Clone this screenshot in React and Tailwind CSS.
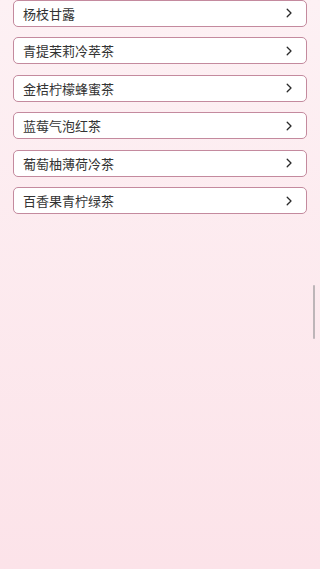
const items = [
  "杨枝甘露",
  "青提茉莉冷萃茶",
  "金桔柠檬蜂蜜茶",
  "蓝莓气泡红茶",
  "葡萄柚薄荷冷茶",
  "百香果青柠绿茶",
];

function Chevron() {
  return (
    <svg className="w-[10px] h-[10px] text-[#2a2a2a]" viewBox="0 0 10 10" fill="none">
      <path d="M3.2 1.2 L7 5 L3.2 8.8" stroke="currentColor" strokeWidth="1.3" strokeLinecap="round" strokeLinejoin="round" />
    </svg>
  );
}

export default function App() {
  return (
    <div
      className="relative w-[320px] h-[569px] overflow-hidden bg-gradient-to-b from-[#fdf1f4] to-[#fce3e9]"
      style={{ fontFamily: '"Noto Sans CJK SC", "Noto Sans", sans-serif' }}
    >
      <div className="flex flex-col gap-[10.5px] px-[13px] -mt-[0.5px]">
        {items.map((name) => (
          <div
            key={name}
            className="flex items-center justify-between h-[27px] pl-[9px] pr-[12px] bg-white border border-[#c48a9e] rounded-[5px]"
          >
            <span className="text-[13px] leading-none text-[#333]">{name}</span>
            <Chevron />
          </div>
        ))}
      </div>
      {/* scroll indicator */}
      <div className="absolute left-[313px] top-[285px] w-[2px] h-[54px] bg-[#bdb5b8] rounded-full" />
    </div>
  );
}
